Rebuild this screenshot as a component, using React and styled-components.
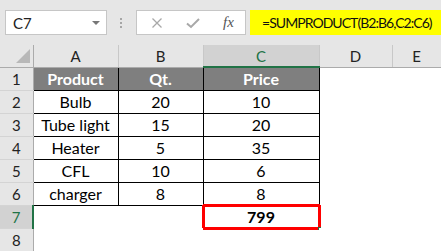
import React from 'react';
import styled, { createGlobalStyle } from 'styled-components';

const GlobalStyle = createGlobalStyle`
  html, body {
    margin: 0;
    padding: 0;
    background: #ffffff;
  }
  body {
    font-family: Lato, 'Liberation Sans', sans-serif;
    overflow: hidden;
  }
`;

const Window = styled.div`
  width: 441px;
  height: 251px;
  overflow: hidden;
  background: #ffffff;
`;

const FormulaBar = styled.div`
  height: 45px;
  box-sizing: border-box;
  display: flex;
  align-items: center;
  padding-left: 5px;
  background: #e6e6e6;
`;

const NameBox = styled.div`
  flex: none;
  width: 102px;
  height: 25px;
  box-sizing: border-box;
  display: flex;
  align-items: center;
  justify-content: space-between;
  padding: 0 6px 0 7px;
  background: #ffffff;
  border: 1px solid #c6c6c6;
  font-size: 15px;
  color: #222222;
`;

const Caret = styled.span`
  width: 0;
  height: 0;
  border-left: 4px solid transparent;
  border-right: 4px solid transparent;
  border-top: 4px solid #777777;
`;

const Grip = styled.div`
  flex: none;
  display: flex;
  flex-direction: column;
  gap: 2px;
  margin: 0 14px 0 13px;
`;

const GripDot = styled.span`
  width: 2px;
  height: 2px;
  background: #a6a6a6;
`;

const EditBox = styled.div`
  flex: none;
  width: 110px;
  height: 25px;
  box-sizing: border-box;
  display: flex;
  align-items: center;
  padding-left: 14px;
  gap: 23px;
  background: #ffffff;
  border: 1px solid #c6c6c6;
`;

const Fx = styled.span`
  font-family: 'Liberation Serif', serif;
  font-style: italic;
  font-size: 15px;
  color: #555555;
`;

const Formula = styled.div`
  flex: 1;
  min-width: 0;
  overflow: hidden;
  height: 25px;
  margin-left: 4px;
  box-sizing: border-box;
  display: flex;
  align-items: center;
  padding-left: 12px;
  background: #ffff00;
  font-size: 14px;
  letter-spacing: -0.95px;
  color: #111111;
  white-space: nowrap;
`;

const Sheet = styled.table`
  border-collapse: collapse;
  table-layout: fixed;
  width: 441px;
  font-size: 15px;
`;

const Row = styled.tr`
  height: ${p => (p.$head ? 22 : 23)}px;
`;

const ColHead = styled.th`
  padding: 0;
  font-weight: normal;
  background: ${p => (p.$active ? '#d2d2d2' : '#e6e6e6')};
  color: ${p => (p.$active ? '#217346' : '#222222')};
  border-right: 1px solid #c8c8c8;
  border-bottom: ${p => (p.$active ? '2px solid #217346' : '1px solid #ababab')};
`;

const Corner = styled.th`
  padding: 0;
  position: relative;
  background: #e6e6e6;
  border-right: 1px solid #ababab;
  border-bottom: 1px solid #ababab;
`;

const CornerMark = styled.span`
  position: absolute;
  right: 3px;
  bottom: 4px;
  width: 0;
  height: 0;
  border-left: 14px solid transparent;
  border-bottom: 14px solid #b8b8b8;
`;

const RowHead = styled.th`
  padding: 0;
  font-weight: normal;
  background: ${p => (p.$active ? '#d2d2d2' : '#e6e6e6')};
  color: ${p => (p.$active ? '#217346' : '#222222')};
  border-bottom: 1px solid #d4d4d4;
  border-right: ${p => (p.$active ? '2px solid #217346' : '1px solid #ababab')};
`;

const Cell = styled.td`
  padding: 0;
  position: relative;
  text-align: center;
  white-space: nowrap;
  font-size: 16px;
  color: ${p => (p.$title ? '#ffffff' : '#000000')};
  background: ${p => (p.$title ? '#7f7f7f' : '#ffffff')};
  font-weight: ${p => (p.$title || p.$bold ? 700 : 400)};
  border: ${p => (p.$boxed ? '1px solid #000000' : p.$picked ? '3px solid #ff0000' : 'none')};
`;

const FillHandle = styled.span`
  position: absolute;
  right: -4px;
  bottom: -4px;
  width: 4px;
  height: 4px;
  background: #217346;
`;

const columns = ['A', 'B', 'C', 'D', 'E'];
const widths = [33, 85, 85, 116, 73, 49];

const items = [
  ['Product', 'Qt.', 'Price'],
  ['Bulb', '20', '10'],
  ['Tube light', '15', '20'],
  ['Heater', '5', '35'],
  ['CFL', '10', '6'],
  ['charger', '8', '8'],
];

function CancelIcon() {
  return (
    <svg width="12" height="12" viewBox="0 0 12 12">
      <path d="M1.5 1.5 L10.5 10.5 M10.5 1.5 L1.5 10.5" stroke="#a8a8a8" strokeWidth="1.3" fill="none" />
    </svg>
  );
}

function CheckIcon() {
  return (
    <svg width="14" height="12" viewBox="0 0 14 12">
      <path d="M1 6.5 L5 10 L13 2" stroke="#a8a8a8" strokeWidth="2" fill="none" />
    </svg>
  );
}

export default function App() {
  return (
    <Window>
      <GlobalStyle />
      <FormulaBar>
        <NameBox>
          C7
          <Caret />
        </NameBox>
        <Grip>
          <GripDot />
          <GripDot />
          <GripDot />
        </Grip>
        <EditBox>
          <CancelIcon />
          <CheckIcon />
          <Fx>fx</Fx>
        </EditBox>
        <Formula>=SUMPRODUCT(B2:B6,C2:C6)</Formula>
      </FormulaBar>
      <Sheet>
        <colgroup>
          {widths.map((w, i) => <col key={i} style={{ width: w }} />)}
        </colgroup>
        <thead>
          <Row $head>
            <Corner><CornerMark /></Corner>
            {columns.map(c => <ColHead key={c} $active={c === 'C'}>{c}</ColHead>)}
          </Row>
        </thead>
        <tbody>
          {items.map((item, r) => (
            <Row key={r}>
              <RowHead>{r + 1}</RowHead>
              {item.map((v, c) => <Cell key={c} $boxed $title={r === 0}>{v}</Cell>)}
              <Cell />
              <Cell />
            </Row>
          ))}
          <Row>
            <RowHead $active>7</RowHead>
            <Cell />
            <Cell />
            <Cell $picked $bold>799<FillHandle /></Cell>
            <Cell />
            <Cell />
          </Row>
          <Row>
            <RowHead>8</RowHead>
            <Cell />
            <Cell />
            <Cell />
            <Cell />
            <Cell />
          </Row>
        </tbody>
      </Sheet>
    </Window>
  );
}
